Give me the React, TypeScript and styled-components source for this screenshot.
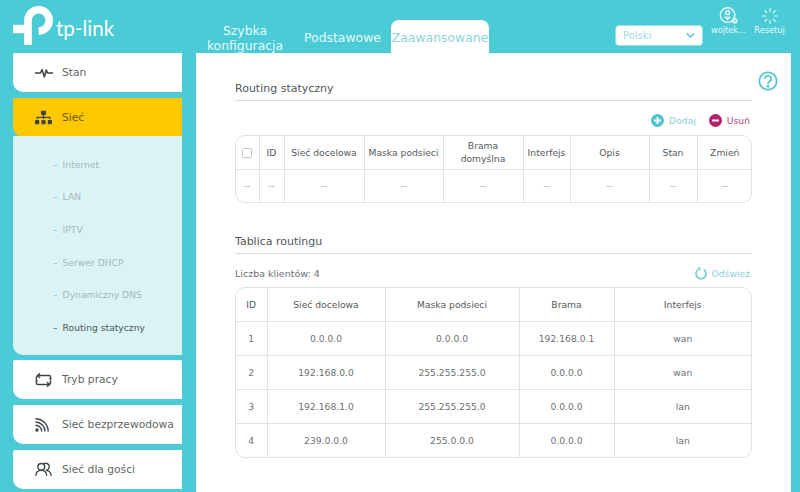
import React from "react";
import styled, { createGlobalStyle } from "styled-components";
import { Loader, ChevronDown } from "lucide-react";
import { FaSitemap } from "react-icons/fa";

const TEAL = "#4acbd6";
const FONT = `"DejaVu Sans", Verdana, sans-serif`;

const GlobalStyle = createGlobalStyle`
  html, body {
    margin: 0;
    padding: 0;
    background: ${TEAL};
    font-family: ${FONT};
    overflow: hidden;
  }
  * { box-sizing: border-box; }
`;

const Page = styled.div`
  width: 800px;
  height: 492px;
  overflow: hidden;
  background: ${TEAL};
  display: flex;
  flex-direction: column;
`;

const Header = styled.header`
  height: 53px;
  flex: none;
  display: flex;
  align-items: flex-end;
`;

const LogoBox = styled.div`
  width: 207px;
  height: 53px;
  flex: none;
  padding: 4px 0 0 12px;
  display: flex;
  align-items: flex-start;
`;

const LogoText = styled.span`
  font-family: "Lato", sans-serif;
  font-size: 20.5px;
  line-height: 26px;
  color: #fff;
  margin: 11px 0 0 2px;
`;

const Tabs = styled.nav`
  display: flex;
  align-items: flex-end;
  height: 53px;
`;

const Tab = styled.div<{ $active?: boolean; $w: number }>`
  width: ${(p) => p.$w}px;
  height: ${(p) => (p.$active ? "33px" : "53px")};
  padding-bottom: 8px;
  background: ${(p) => (p.$active ? "#fff" : "transparent")};
  color: ${(p) => (p.$active ? "#8bd4dc" : "#e6fafb")};
  border-radius: ${(p) => (p.$active ? "8px 8px 0 0" : "0")};
  font-size: 12.4px;
  line-height: 15px;
  text-align: center;
  display: flex;
  align-items: flex-end;
  justify-content: center;
  white-space: pre-line;
`;

const QuickTab = styled(Tab)`
  padding-bottom: 0;
`;

const PlainTab = styled(Tab)`
  padding-left: 11px;
`;

const HeaderRight = styled.div`
  margin-left: auto;
  height: 53px;
  display: flex;
  align-items: flex-start;
  padding-right: 10px;
`;

const LangSelect = styled.div`
  width: 88px;
  height: 21px;
  margin: 25px 5px 0 0;
  padding: 0 5px 0 7px;
  background: #fff;
  border: 1px solid #9adfe6;
  border-radius: 4px;
  font-size: 10px;
  color: #a3dbe1;
  display: flex;
  align-items: center;
  justify-content: space-between;
  svg { color: #6fcbd5; }
`;

const HeaderAction = styled.div`
  width: 41px;
  padding-top: 7px;
  display: flex;
  flex-direction: column;
  align-items: center;
  color: #e6fafb;
  font-size: 8.2px;
  line-height: 10px;
  white-space: nowrap;
`;

const Body = styled.div`
  flex: 1;
  display: flex;
  min-height: 0;
`;

const Sidebar = styled.aside`
  width: 169px;
  margin-left: 13px;
  flex: none;
  display: flex;
  flex-direction: column;
`;

const MenuItem = styled.div<{ $active?: boolean; $gap?: number }>`
  height: 39px;
  flex: none;
  margin-top: ${(p) => p.$gap ?? 6}px;
  background: ${(p) => (p.$active ? "#ffc800" : "#fff")};
  color: ${(p) => (p.$active ? "#6b5a10" : "#5f6566")};
  border-radius: 2px 0 0 10px;
  display: flex;
  align-items: center;
  font-size: 10.7px;
  white-space: nowrap;
`;

const MenuIcon = styled.span`
  width: 49px;
  padding-left: 22px;
  flex: none;
  display: flex;
  align-items: center;
  color: #3d4447;
`;

const SubMenu = styled.div`
  height: 219px;
  flex: none;
  margin-top: -1px;
  padding-top: 12px;
  background: #daf4f6;
  border-radius: 0 0 0 10px;
`;

const SubItem = styled.div<{ $active?: boolean }>`
  height: 32.6px;
  padding-left: 40px;
  display: flex;
  align-items: center;
  gap: 5px;
  font-size: 9.2px;
  color: ${(p) => (p.$active ? "#4d5659" : "#a8b5b8")};
`;

const Content = styled.main`
  width: 595px;
  margin-left: 14px;
  flex: none;
  background: #fff;
  padding: 0 39px 0 39px;
  position: relative;
`;

const HelpIcon = styled.span`
  position: absolute;
  right: 13px;
  top: 18px;
  color: #58c5cf;
`;

const SectionTitle = styled.h2<{ $top: number }>`
  margin: ${(p) => p.$top}px 0 0;
  height: 20px;
  border-bottom: 1px solid #dcdfe0;
  font-size: 11px;
  font-weight: normal;
  line-height: 15px;
  color: #4f5558;
`;

const ActionBar = styled.div<{ $between?: boolean }>`
  height: 34px;
  padding: 4px 2px 0 0;
  display: flex;
  align-items: center;
  justify-content: ${(p) => (p.$between ? "space-between" : "flex-end")};
  gap: 13px;
`;

const CountRow = styled(ActionBar)`
  height: 33px;
  padding-top: 5px;
`;

const Count = styled.span`
  font-size: 9.5px;
  color: #6b7072;
`;

const Action = styled.span<{ $danger?: boolean }>`
  display: inline-flex;
  align-items: center;
  gap: 5px;
  font-size: 9.2px;
  color: ${(p) => (p.$danger ? "#b5437e" : "#8bd0da")};
`;

const TableFrame = styled.div`
  border: 1px solid #dfe1e2;
  border-radius: 10px;
  overflow: hidden;
`;

const Table = styled.table`
  width: 100%;
  border-collapse: collapse;
  table-layout: fixed;
`;

const Th = styled.th<{ $h?: number }>`
  height: ${(p) => p.$h ?? 33}px;
  padding: 0;
  border: 1px solid #e0e2e3;
  border-width: 0 1px 1px 0;
  font-size: 9.2px;
  font-weight: normal;
  line-height: 13px;
  color: #55595b;
  text-align: center;
  white-space: pre-line;
  &:last-child { border-right: 0; }
`;

const Td = styled.td<{ $muted?: boolean; $h?: number }>`
  height: ${(p) => p.$h ?? 34}px;
  padding: 0;
  border: 1px solid #e0e2e3;
  border-width: 0 1px 1px 0;
  font-size: 9.2px;
  color: ${(p) => (p.$muted ? "#a9adae" : "#6d7173")};
  text-align: center;
  &:last-child { border-right: 0; }
  tr:last-child > & { border-bottom: 0; }
`;

const Checkbox = styled.span`
  display: inline-block;
  width: 10px;
  height: 10px;
  border: 1px solid #c2c5c6;
  border-radius: 1.5px;
  vertical-align: middle;
`;

const Logo = () => (
  <svg width="42" height="42" viewBox="0 0 42 42">
    <g fill="none" stroke="#fff" strokeWidth="7.6">
      <path d="M16 41V16.5A10.6 10.6 0 1 1 26.6 27" />
      <path d="M16 25H1" strokeWidth="8.4" />
    </g>
  </svg>
);

const PulseIcon = () => (
  <svg width="18" height="12" viewBox="0 0 18 12" fill="none" stroke="#3d4447" strokeWidth="1.5" strokeLinejoin="round">
    <path d="M0 6h5.5l1.6-3.4 2.2 7.4 2-7 1.2 3H18" />
  </svg>
);

const ModeIcon = () => (
  <svg width="17" height="14" viewBox="0 0 17 14" fill="none" stroke="#3d4447" strokeWidth="1.5">
    <path d="M1.5 7V4.5a2 2 0 0 1 2-2H14a1.6 1.6 0 0 1 1.6 1.6V5" />
    <path d="M15.5 7.5v2a2 2 0 0 1-2 2H3a1.6 1.6 0 0 1-1.6-1.6V9" />
    <path d="M5 .3L2.6 2.5 5 4.7M12 9.3l2.4 2.2-2.4 2.2" />
    <path d="M13.7 5.2h3.6l-1.8 2.2zM-.3 8.8h3.6L1.5 6.6z" fill="#3d4447" stroke="none" />
  </svg>
);

const WirelessIcon = () => (
  <svg width="15" height="15" viewBox="0 0 15 15" fill="none" stroke="#3d4447" strokeWidth="1.4">
    <circle cx="2" cy="13" r="1.7" fill="#3d4447" stroke="none" />
    <path d="M.5 8.2a6.2 6.2 0 0 1 6.2 6.3" />
    <path d="M.5 5a9.5 9.5 0 0 1 9.5 9.5" />
    <path d="M.5 1.8A12.7 12.7 0 0 1 13.2 14.5" />
  </svg>
);

const GuestIcon = () => (
  <svg width="17" height="15" viewBox="0 0 19 16" fill="none" stroke="#3d4447" strokeWidth="1.6">
    <circle cx="7" cy="5" r="3.8" />
    <path d="M1 15c0-3.6 2.4-6 6-6s6 2.4 6 6" />
    <path d="M9.6 1.5a3.8 3.8 0 0 1 2.4-.5 3.9 3.9 0 0 1 0 7.8" />
    <path d="M13.5 9.2c2.6.6 4.5 2.8 4.5 5.8" />
  </svg>
);

const ClientIcon = () => (
  <svg width="20" height="18" viewBox="0 0 21 19" fill="none" stroke="#e6fafb" strokeWidth="1.5">
    <circle cx="9" cy="8.5" r="7.7" />
    <circle cx="9" cy="6" r="2" />
    <path d="M5.5 10.5h7L9 14z" fill="#e6fafb" strokeWidth="0.5" />
    <circle cx="16.5" cy="14.5" r="3" fill="#e6fafb" stroke="none" />
    <path d="M15 14.5h3" stroke={TEAL} strokeWidth="1" />
  </svg>
);

const HelpCircle = () => (
  <svg width="20" height="20" viewBox="0 0 20 20" fill="none" stroke="currentColor" strokeWidth="1.8">
    <circle cx="10" cy="10" r="8.7" />
    <path d="M6.9 7.8a3.1 3.1 0 1 1 4.9 2.5c-1 .7-1.8 1.2-1.8 2.7" />
    <circle cx="10" cy="15.2" r="0.6" fill="currentColor" />
  </svg>
);

const RoundAction = ({ color, plus }: { color: string; plus?: boolean }) => (
  <svg width="13" height="13" viewBox="0 0 13 13">
    <circle cx="6.5" cy="6.5" r="6.5" fill={color} />
    <path d={plus ? "M6.5 3v7M3 6.5h7" : "M3 6.5h7"} stroke="#fff" strokeWidth="2" />
  </svg>
);

const RefreshIcon = () => (
  <svg width="12" height="14" viewBox="0 0 12 14" fill="none">
    <path d="M3.2 3.6a5 5 0 1 0 5.6 0" stroke="#7fd0d8" strokeWidth="1.8" />
    <path d="M2 1.2l3.6.4-.4 3.6z" fill="#7fd0d8" />
  </svg>
);

const subItems = ["Internet", "LAN", "IPTV", "Serwer DHCP", "Dynamiczny DNS", "Routing statyczny"];

const staticCols = [23, 25, 80, 79, 80, 47, 79, 48, 55];
const staticHead = ["", "ID", "Sieć docelowa", "Maska podsieci", "Brama\ndomyślna", "Interfejs", "Opis", "Stan", "Zmień"];

const routeCols = [31, 118, 134, 95, 137];
const routeHead = ["ID", "Sieć docelowa", "Maska podsieci", "Brama", "Interfejs"];
const routes = [
  ["1", "0.0.0.0", "0.0.0.0", "192.168.0.1", "wan"],
  ["2", "192.168.0.0", "255.255.255.0", "0.0.0.0", "wan"],
  ["3", "192.168.1.0", "255.255.255.0", "0.0.0.0", "lan"],
  ["4", "239.0.0.0", "255.0.0.0", "0.0.0.0", "lan"],
];

export default function App() {
  return (
    <Page>
      <GlobalStyle />
      <Header>
        <LogoBox>
          <Logo />
          <LogoText>tp-link</LogoText>
        </LogoBox>
        <Tabs>
          <QuickTab $w={76}>{"Szybka\nkonfiguracja"}</QuickTab>
          <PlainTab $w={108}>Podstawowe</PlainTab>
          <Tab $w={98} $active>
            Zaawansowane
          </Tab>
        </Tabs>
        <HeaderRight>
          <LangSelect>
            Polski
            <ChevronDown size={13} strokeWidth={3} />
          </LangSelect>
          <HeaderAction>
            <ClientIcon />
            wojtek...
          </HeaderAction>
          <HeaderAction>
            <Loader size={18} strokeWidth={1.6} />
            Resetuj
          </HeaderAction>
        </HeaderRight>
      </Header>
      <Body>
        <Sidebar>
          <MenuItem $gap={0}>
            <MenuIcon>
              <PulseIcon />
            </MenuIcon>
            Stan
          </MenuItem>
          <MenuItem $active>
            <MenuIcon>
              <FaSitemap size={17} />
            </MenuIcon>
            Sieć
          </MenuItem>
          <SubMenu>
            {subItems.map((s, i) => (
              <SubItem key={s} $active={i === subItems.length - 1}>
                <span>–</span>
                {s}
              </SubItem>
            ))}
          </SubMenu>
          <MenuItem $gap={5}>
            <MenuIcon>
              <ModeIcon />
            </MenuIcon>
            Tryb pracy
          </MenuItem>
          <MenuItem>
            <MenuIcon>
              <WirelessIcon />
            </MenuIcon>
            Sieć bezprzewodowa
          </MenuItem>
          <MenuItem>
            <MenuIcon>
              <GuestIcon />
            </MenuIcon>
            Sieć dla gości
          </MenuItem>
        </Sidebar>
        <Content>
          <HelpIcon>
            <HelpCircle />
          </HelpIcon>
          <SectionTitle $top={28}>Routing statyczny</SectionTitle>
          <ActionBar>
            <Action>
              <RoundAction color="#4fc3cf" plus />
              Dodaj
            </Action>
            <Action $danger>
              <RoundAction color="#b4206a" />
              Usuń
            </Action>
          </ActionBar>
          <TableFrame>
            <Table>
              <colgroup>
                {staticCols.map((w, i) => (
                  <col key={i} style={{ width: w }} />
                ))}
              </colgroup>
              <thead>
                <tr>
                  {staticHead.map((h, i) => (
                    <Th key={i}>{i === 0 ? <Checkbox /> : h}</Th>
                  ))}
                </tr>
              </thead>
              <tbody>
                <tr>
                  {staticHead.map((_, i) => (
                    <Td key={i} $muted $h={33}>
                      --
                    </Td>
                  ))}
                </tr>
              </tbody>
            </Table>
          </TableFrame>
          <SectionTitle $top={31}>Tablica routingu</SectionTitle>
          <CountRow $between>
            <Count>Liczba klientów: 4</Count>
            <Action>
              <RefreshIcon />
              Odśwież
            </Action>
          </CountRow>
          <TableFrame>
            <Table>
              <colgroup>
                {routeCols.map((w, i) => (
                  <col key={i} style={{ width: w }} />
                ))}
              </colgroup>
              <thead>
                <tr>
                  {routeHead.map((h) => (
                    <Th key={h}>{h}</Th>
                  ))}
                </tr>
              </thead>
              <tbody>
                {routes.map((r) => (
                  <tr key={r[0]}>
                    {r.map((c, i) => (
                      <Td key={i}>{c}</Td>
                    ))}
                  </tr>
                ))}
              </tbody>
            </Table>
          </TableFrame>
        </Content>
      </Body>
    </Page>
  );
}
